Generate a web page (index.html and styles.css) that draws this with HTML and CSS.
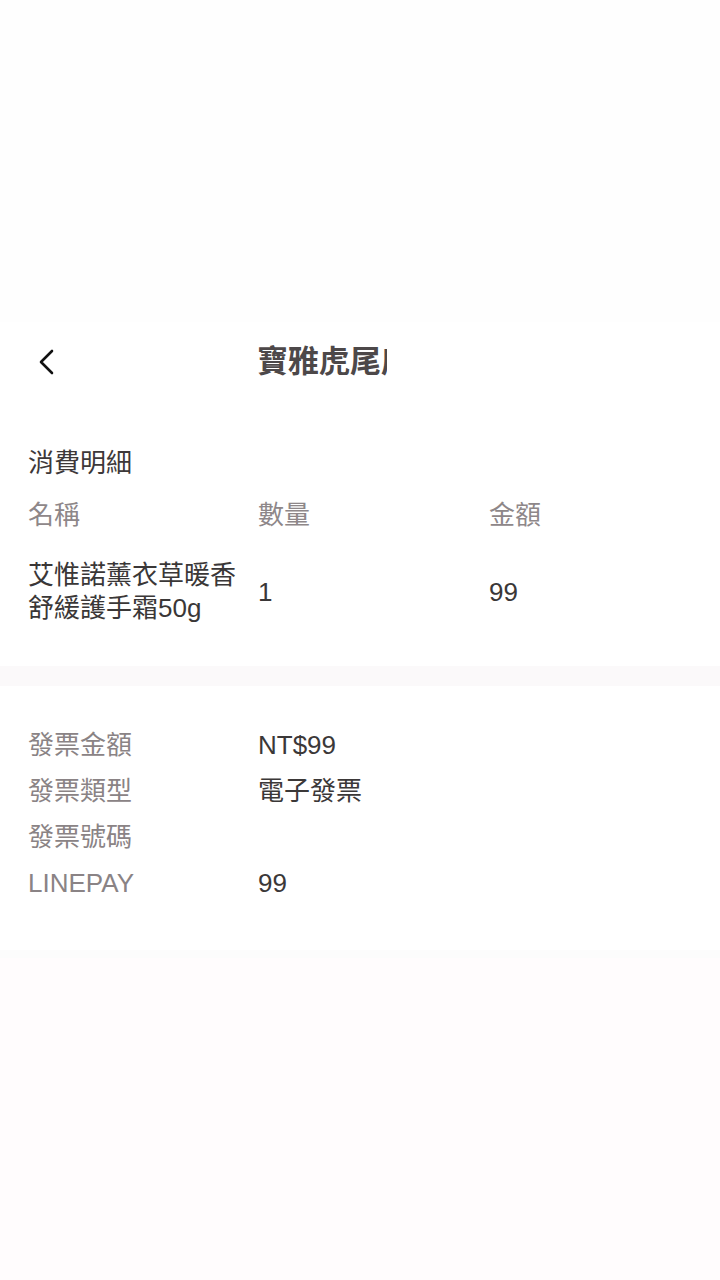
FILE: index.html
```html
<!DOCTYPE html>
<html lang="zh-Hant">
<head>
    <meta charset="UTF-8">
    <meta name="viewport" content="width=device-width, initial-scale=1.0">
    <title>寶雅虎尾店</title>
    <link rel="stylesheet" href="styles.css">
</head>
<body>

    <div class="top-space"></div>

    <div class="header">
        <a class="back" href="#">
            <svg width="18" height="26" viewBox="0 0 18 26">
                <path d="M15 2 L4 13 L15 24" fill="none" stroke="#111" stroke-width="2.6" stroke-linecap="round" stroke-linejoin="round"/>
            </svg>
        </a>
        <div class="title">寶雅虎尾店</div>
    </div>

    <div class="section detail">
        <h2>消費明細</h2>
        <div class="grid head">
            <span>名稱</span>
            <span>數量</span>
            <span>金額</span>
        </div>
        <div class="grid item">
            <span class="name">艾惟諾薰衣草暖香<br>舒緩護手霜50g</span>
            <span>1</span>
            <span>99</span>
        </div>
    </div>

    <div class="gap"></div>

    <div class="section invoice">
        <div class="row"><span class="label">發票金額</span><span>NT$99</span></div>
        <div class="row"><span class="label">發票類型</span><span>電子發票</span></div>
        <div class="row"><span class="label">發票號碼</span><span></span></div>
        <div class="row"><span class="label">LINEPAY</span><span>99</span></div>
    </div>

    <div class="band"></div>

</body>
</html>
```

FILE: styles.css
```css
body {
    margin: 0;
    font-family: "Liberation Sans", "Noto Sans CJK TC", sans-serif;
    background-color: #fffcfd; /* faint pink page */
    color: #3b3838;
}
.top-space {
    height: 322px;
    background-color: #fefefe;
}
.header {
    height: 80px;
    background-color: #ffffff;
    display: flex;
    align-items: center;
}
.back {
    width: 257px;
    padding-left: 37px;
    box-sizing: border-box;
    display: flex;
    align-items: center;
}
.title {
    width: 130px;
    overflow: hidden;
    white-space: nowrap;
    font-size: 31px;
    font-weight: bold;
    color: #4d4849;
    line-height: 40px;
}
.section {
    background-color: #ffffff;
    padding-left: 28px;
}
.detail {
    padding-top: 43px;
    padding-bottom: 41px;
}
h2 {
    margin: 0;
    font-size: 26px;
    font-weight: normal;
    line-height: 36px;
    color: #3d3839;
}
.grid {
    display: grid;
    grid-template-columns: 230px 231px 1fr;
    align-items: center;
    font-size: 26px;
}
.head {
    margin-top: 16px;
    line-height: 36px;
    color: #8e8789;
}
.item {
    margin-top: 26px;
    line-height: 33px;
    color: #3a3737;
}
.gap {
    height: 20px;
    background-color: #fbf9fa;
}
.invoice {
    padding-top: 36px;
    padding-bottom: 44px;
}
.row {
    display: grid;
    grid-template-columns: 230px 1fr;
    font-size: 26px;
    line-height: 46px;
    height: 46px;
}
.label {
    color: #8a8385;
}
.band {
    height: 8px;
    background-color: #fcfcfc;
}
```
